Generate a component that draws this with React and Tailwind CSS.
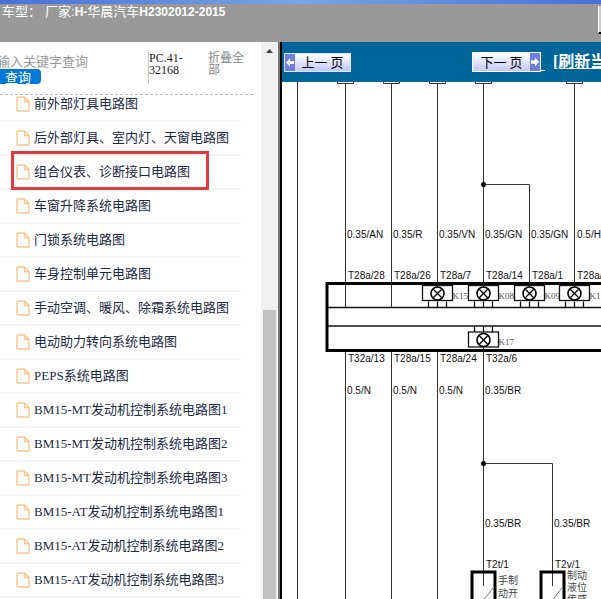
import React from "react";

const circuits = [
  "前外部灯具电路图",
  "后外部灯具、室内灯、天窗电路图",
  "组合仪表、诊断接口电路图",
  "车窗升降系统电路图",
  "门锁系统电路图",
  "车身控制单元电路图",
  "手动空调、暖风、除霜系统电路图",
  "电动助力转向系统电路图",
  "PEPS系统电路图",
  "BM15-MT发动机控制系统电路图1",
  "BM15-MT发动机控制系统电路图2",
  "BM15-MT发动机控制系统电路图3",
  "BM15-AT发动机控制系统电路图1",
  "BM15-AT发动机控制系统电路图2",
  "BM15-AT发动机控制系统电路图3",
];

const HIGHLIGHTED = 2;

function FileIcon() {
  return (
    <svg className="h-4 w-[14px] shrink-0" viewBox="0 0 14 16" fill="none" stroke="#f9c78f" strokeWidth="1.4" aria-hidden="true">
      <path d="M1.5 1H8.5L13 5.5V14.5Q13 15 12.5 15H1.5Q1 15 1 14.5V1.5Q1 1 1.5 1Z" />
      <path d="M8.5 1V5.5H13" />
    </svg>
  );
}

function ArrowBlock({ flip }) {
  return (
    <svg className={flip ? "h-full w-[10px] shrink-0 rotate-180" : "h-full w-[10px] shrink-0"} viewBox="0 0 10 16" preserveAspectRatio="none" aria-hidden="true">
      <rect width="10" height="16" fill="#6f7ee0" />
      <path d="M1 8L5 4V6.5H9V9.5H5V12Z" fill="#fff" />
    </svg>
  );
}

function Lamp({ x, y, name, up }) {
  const edge = up ? y - 8 : y + 8;
  const end = up ? y - 14 : y + 14;
  return (
    <g>
      <rect x={x - 15} y={y - 8} width="30" height="15" fill="#fff" stroke="#111" strokeWidth="1.3" />
      <path d={`M${x - 9} ${edge}V${end}M${x} ${edge}V${end}M${x + 9} ${edge}V${end}`} stroke="#111" strokeWidth="1.3" />
      <path d={up ? `M${x} ${y + 6}V${y + 12}` : `M${x} ${y - 6}V${y - 12}`} stroke="#222" />
      <circle cx={x} cy={y} r="6.5" fill="#fff" stroke="#000" strokeWidth="1.6" />
      <path d={`M${x - 4} ${y - 4}l8 8M${x + 4} ${y - 4}l-8 8`} stroke="#000" strokeWidth="1.3" />
      <text x={x + 15} y={y + 5} className="fill-[#555] font-['Liberation_Serif',serif] text-[9px]">{name}</text>
    </g>
  );
}

const labels = [
  [65, 156, "0.35/AN"], [111, 156, "0.35/R"], [157, 156, "0.35/VN"], [203, 156, "0.35/GN"], [249, 156, "0.35/GN"], [295, 156, "0.5/HO"],
  [66, 197, "T28a/28"], [112, 197, "T28a/26"], [158, 197, "T28a/7"], [204, 197, "T28a/14"], [250, 197, "T28a/1"], [295, 197, "T28a/2"],
  [66, 280, "T32a/13"], [112, 280, "T28a/15"], [158, 280, "T28a/24"], [204, 280, "T32a/6"],
  [65, 312, "0.5/N"], [111, 312, "0.5/N"], [157, 312, "0.5/N"], [203, 312, "0.35/BR"],
  [203, 445, "0.35/BR"], [272, 445, "0.35/BR"], [204, 486, "T2t/1"], [273, 486, "T2v/1"],
];

const notes = [
  [216, 502, "手制"], [216, 515, "动开"],
  [285, 497, "制动"], [285, 509, "液位"], [285, 521, "传感"],
];

function WiringDiagram() {
  return (
    <svg className="block h-full w-full" role="img" aria-label="组合仪表、诊断接口电路图">
      <g fill="none" stroke="#333" strokeWidth="1">
        <path d="M15.5 0V2000" />
        {[63.5, 109.5, 155.5, 201.5, 292.5].map((x) => (
          <path key={x} d={`M${x - 8} 0V1.5H${x + 8}V0`} />
        ))}
        <path d="M63.5 2V225M109.5 2V225M155.5 2V206M201.5 2V206M292.5 2V206" />
        <path d="M201.5 102.5H247.5V206" />
        <path d="M63.5 269V2000M109.5 269V2000M155.5 269V2000M201.5 262V504" />
        <path d="M201.5 381.5H270.5V504" />
      </g>
      <circle cx="201.5" cy="102.5" r="2.5" />
      <circle cx="201.5" cy="381.5" r="2.5" />
      <path d="M2000 201.5H45V268.5H2000" fill="none" stroke="#000" strokeWidth="3" />
      <path d="M45 225.5H2000M45 244H2000" stroke="#111" strokeWidth="1.4" />
      <Lamp x={155.5} y={211.5} name="K15" />
      <Lamp x={201.5} y={211.5} name="K08" />
      <Lamp x={247.5} y={211.5} name="K09" />
      <Lamp x={292.5} y={211.5} name="K11" />
      <Lamp x={201.5} y={258} name="K17" up />
      <g fill="none" stroke="#000" strokeWidth="3">
        <path d="M190 2000V490H213V2000" />
        <path d="M259 2000V490H282V2000" />
      </g>
      <path d="M211 506L200 520M280 506L269 520" stroke="#777" />
      <g className="fill-[#111] font-['Liberation_Sans',Arial,sans-serif] text-[10px]">
        {labels.map(([x, y, t]) => (
          <text key={`${x}-${y}`} x={x} y={y}>{t}</text>
        ))}
      </g>
      <g className="fill-[#444] font-['Noto_Sans_CJK_SC',sans-serif] text-[10px]">
        {notes.map(([x, y, t]) => (
          <text key={`${x}-${y}`} x={x} y={y}>{t}</text>
        ))}
      </g>
    </svg>
  );
}

function Sidebar() {
  return (
    <aside className="flex w-[282px] shrink-0 bg-white">
      <div className="flex min-w-0 flex-1 flex-col overflow-hidden">
        <form className="mr-2 flex h-[53px] shrink-0 items-start border-b border-dashed border-[#b5bcc6] pt-[10px]" onSubmit={(e) => e.preventDefault()}>
          <div className="flex w-[148px] flex-col items-start pt-px">
            <input
              aria-label="输入关键字查询"
              placeholder="输入关键字查询"
              className="-ml-[3px] block h-4 w-36 bg-transparent font-['Noto_Sans_CJK_SC',sans-serif] text-[13px] leading-4 outline-none placeholder:text-[#999]"
            />
            <button type="submit" className="h-[15px] rounded-r bg-[#0078d7] pr-[10px] pl-[5px] font-['Noto_Sans_CJK_SC',sans-serif] text-[13px] leading-[15px] text-white">查询</button>
          </div>
          <div className="h-8 w-[60px] border-l border-[#ccc] text-[12px] leading-3 text-[#222]">PC.41-<br />32168</div>
          <button type="button" className="w-10 text-left text-[12px] leading-3 text-[#888]">折叠全部</button>
        </form>
        <ul className="-mt-[7px] mr-5">
          {circuits.map((name, i) => (
            <li key={name} className="relative h-[34px] border-b-2 border-[#f5f5f5]">
              <a href="#diagram" className="flex h-full items-center gap-1 pb-px pl-4 text-[13px] whitespace-nowrap text-[#1d2a44]">
                <FileIcon />
                {name}
              </a>
              {i === HIGHLIGHTED && <span className="pointer-events-none absolute -top-[5px] left-[11px] h-[39px] w-[198px] border-3 border-[#e53b3e]" />}
            </li>
          ))}
        </ul>
      </div>
      <div className="flex w-[17px] flex-col items-center bg-[#f0f0f0]">
        <svg className="mt-[7px] h-1 w-[7px]" viewBox="0 0 7 4" aria-hidden="true"><path d="M0 4L3.5 0L7 4Z" fill="#444" /></svg>
        <div className="mt-[257px] w-[13px] flex-1 bg-[#c1c1c1]" />
      </div>
      <div className="w-1 border-r-2 border-l-2 border-r-black border-l-[#777]" />
    </aside>
  );
}

export default function App() {
  return (
    <div className="flex h-screen flex-col overflow-hidden bg-white font-['Liberation_Serif','Noto_Sans_CJK_SC',serif]">
      <header className="flex h-[42px] shrink-0 flex-col bg-[#999]">
        <div className="h-1 bg-linear-to-r from-[#4a6fd6] via-[#7ba4e6] to-[#4a6fd6]" />
        <div className="flex flex-1 items-start justify-between">
          <h1 className="flex items-center pl-[2px] font-['Liberation_Sans','Noto_Sans_CJK_SC',sans-serif] text-[13px] leading-4 font-normal whitespace-pre text-white">
            <span>车型：</span>
            <span className="pl-1">厂家:</span>
            <span className="text-[12px] font-bold">H-</span>
            <span>华晨汽车</span>
            <span className="text-[12px] font-bold">H2302012-2015</span>
          </h1>
          <button type="button" aria-label="菜单" className="mt-[2px] h-7 w-[3px] border-b-2 border-l border-b-black border-l-white bg-[#ccc]" />
        </div>
      </header>
      <div className="flex min-h-0 flex-1">
        <Sidebar />
        <main className="flex min-w-0 flex-1 flex-col overflow-hidden">
          <nav className="flex h-10 shrink-0 items-center bg-[#006699] pl-[2px] font-['Noto_Sans_CJK_SC',sans-serif] whitespace-nowrap">
            <button type="button" className="flex h-[19px] w-[67px] shrink-0 items-center border border-[#dfe4ff] bg-linear-to-b from-white to-[#c3c8fa] text-[13px] leading-4 text-black">
              <ArrowBlock />
              <span className="flex-1 text-center">上一 页</span>
            </button>
            <button type="button" className="ml-[121px] flex h-[20px] w-[69px] shrink-0 items-center border border-white bg-linear-to-b from-white to-[#c3c8fa] text-[13px] leading-4 text-black">
              <span className="flex-1 text-center">下一 页</span>
              <ArrowBlock flip />
            </button>
            <span className="mt-4 h-px w-1 shrink-0 bg-white" />
            <a href="#refresh" className="ml-2 shrink-0 font-['Liberation_Serif','Noto_Sans_CJK_SC',serif] text-[16px] leading-5 font-bold text-white underline">[刷新当前</a>
          </nav>
          <div id="diagram" className="min-h-0 flex-1">
            <WiringDiagram />
          </div>
        </main>
      </div>
    </div>
  );
}
